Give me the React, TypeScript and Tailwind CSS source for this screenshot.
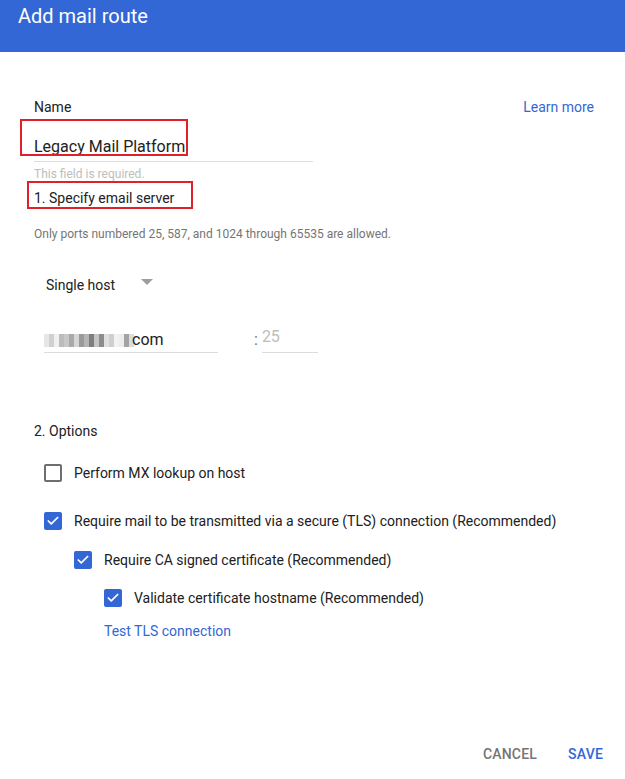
import { Check } from "lucide-react";

const mosaic = [
  "#e6e6e6", "#d0d0d0", "#f0f0f0", "#bcbcbc", "#c8c8c8", "#a9a9a9", "#d6d6d6", "#9a9a9a",
  "#b5b5b5", "#7e7e7e", "#c4c4c4", "#8c8c8c", "#e0e0e0", "#cfcfcf", "#f2f2f2", "#ededed",
  "#a3a3a3", "#dcdcdc",
];

function Box({ checked }: { checked: boolean }) {
  return checked ? (
    <span className="w-[18px] h-[18px] rounded-[2px] bg-[#3367d6] flex items-center justify-center shrink-0">
      <Check size={14} strokeWidth={3} className="text-white" />
    </span>
  ) : (
    <span className="w-[18px] h-[18px] rounded-[2px] border-2 border-[#6e6e6e] shrink-0" />
  );
}

function Option({ checked, label }: { checked: boolean; label: string }) {
  return (
    <div className="flex items-center gap-3 h-[20px]">
      <Box checked={checked} />
      <span className="text-[14px] text-[#212121]">{label}</span>
    </div>
  );
}

export default function App() {
  return (
    <div className="w-[625px] h-[779px] bg-white flex flex-col font-['Roboto',sans-serif] text-[#212121]">
      <div className="h-[52px] bg-[#3367d6] px-[18px] pt-[3px] shrink-0">
        <h1 className="text-[20px] leading-[26px] text-white">Add mail route</h1>
      </div>

      <div className="flex-1 px-[34px] pt-[47px]">
        <div className="flex justify-between items-start">
          <span className="text-[14px] leading-[16px]">Name</span>
          <span className="text-[14px] leading-[16px] text-[#3367d6] mr-[-3px]">Learn more</span>
        </div>

        <div className="relative mt-[20px] w-[279px] border-b border-[#dcdcdc] pb-[2px]">
          <span className="text-[16px] leading-[19px]">Legacy Mail Platform</span>
          <span className="absolute left-[-14px] top-[-16px] w-[168px] h-[37px] border-2 border-[#e0202a]" />
        </div>
        <p className="mt-[5px] text-[12px] leading-[14px] text-[#bdbdbd]">This field is required.</p>

        <div className="relative mt-[5px]">
          <span className="text-[14px] leading-[18px]">1. Specify email server</span>
          <span className="absolute left-[-7px] top-[-5px] w-[166px] h-[28px] border-2 border-[#e0202a]" />
        </div>
        <p className="mt-[17px] text-[12px] leading-[14px] text-[#757575]">
          Only ports numbered 25, 587, and 1024 through 65535 are allowed.
        </p>

        <div className="mt-[36px] ml-[12px] flex items-center">
          <span className="text-[14px] leading-[16px]">Single host</span>
          <span className="ml-[26px] mt-[-6px] w-0 h-0 border-l-[6px] border-r-[6px] border-t-[6px] border-l-transparent border-r-transparent border-t-[#9e9e9e]" />
        </div>

        <div className="mt-[32px] ml-[10px] flex items-end">
          <div className="w-[174px] border-b border-[#dcdcdc] pb-[3px] flex items-center">
            <span className="flex h-[13px] mt-[1px]">
              {mosaic.map((c, i) => (
                <span key={i} className="w-[5px] h-full" style={{ background: c }} />
              ))}
            </span>
            <span className="text-[16px] leading-[19px] ml-[-2px]">com</span>
          </div>
          <span className="ml-[36px] text-[16px] leading-[19px] text-[#757575] pb-[4px]">:</span>
          <div className="ml-[4px] w-[56px] border-b border-[#dcdcdc] pb-[3px]">
            <span className="text-[16px] leading-[19px] text-[#bdbdbd]">25</span>
          </div>
        </div>

        <p className="mt-[69px] text-[14px] leading-[18px]">2. Options</p>

        <div className="mt-[23px] ml-[10px] flex flex-col">
          <Option checked={false} label="Perform MX lookup on host" />
          <div className="mt-[28px]">
            <Option
              checked
              label="Require mail to be transmitted via a secure (TLS) connection (Recommended)"
            />
          </div>
          <div className="mt-[19px] ml-[30px]">
            <Option checked label="Require CA signed certificate (Recommended)" />
          </div>
          <div className="mt-[18px] ml-[60px]">
            <Option checked label="Validate certificate hostname (Recommended)" />
          </div>
          <p className="mt-[14px] ml-[60px] text-[14px] leading-[18px] text-[#3367d6]">
            Test TLS connection
          </p>
        </div>
      </div>

      <div className="h-[33px] flex justify-end items-start gap-[31px] pr-[22px] shrink-0">
        <button className="text-[14px] leading-[16px] font-medium text-[#757575] tracking-[0.2px]">CANCEL</button>
        <button className="text-[14px] leading-[16px] font-medium text-[#3367d6] tracking-[0.2px]">SAVE</button>
      </div>
    </div>
  );
}
